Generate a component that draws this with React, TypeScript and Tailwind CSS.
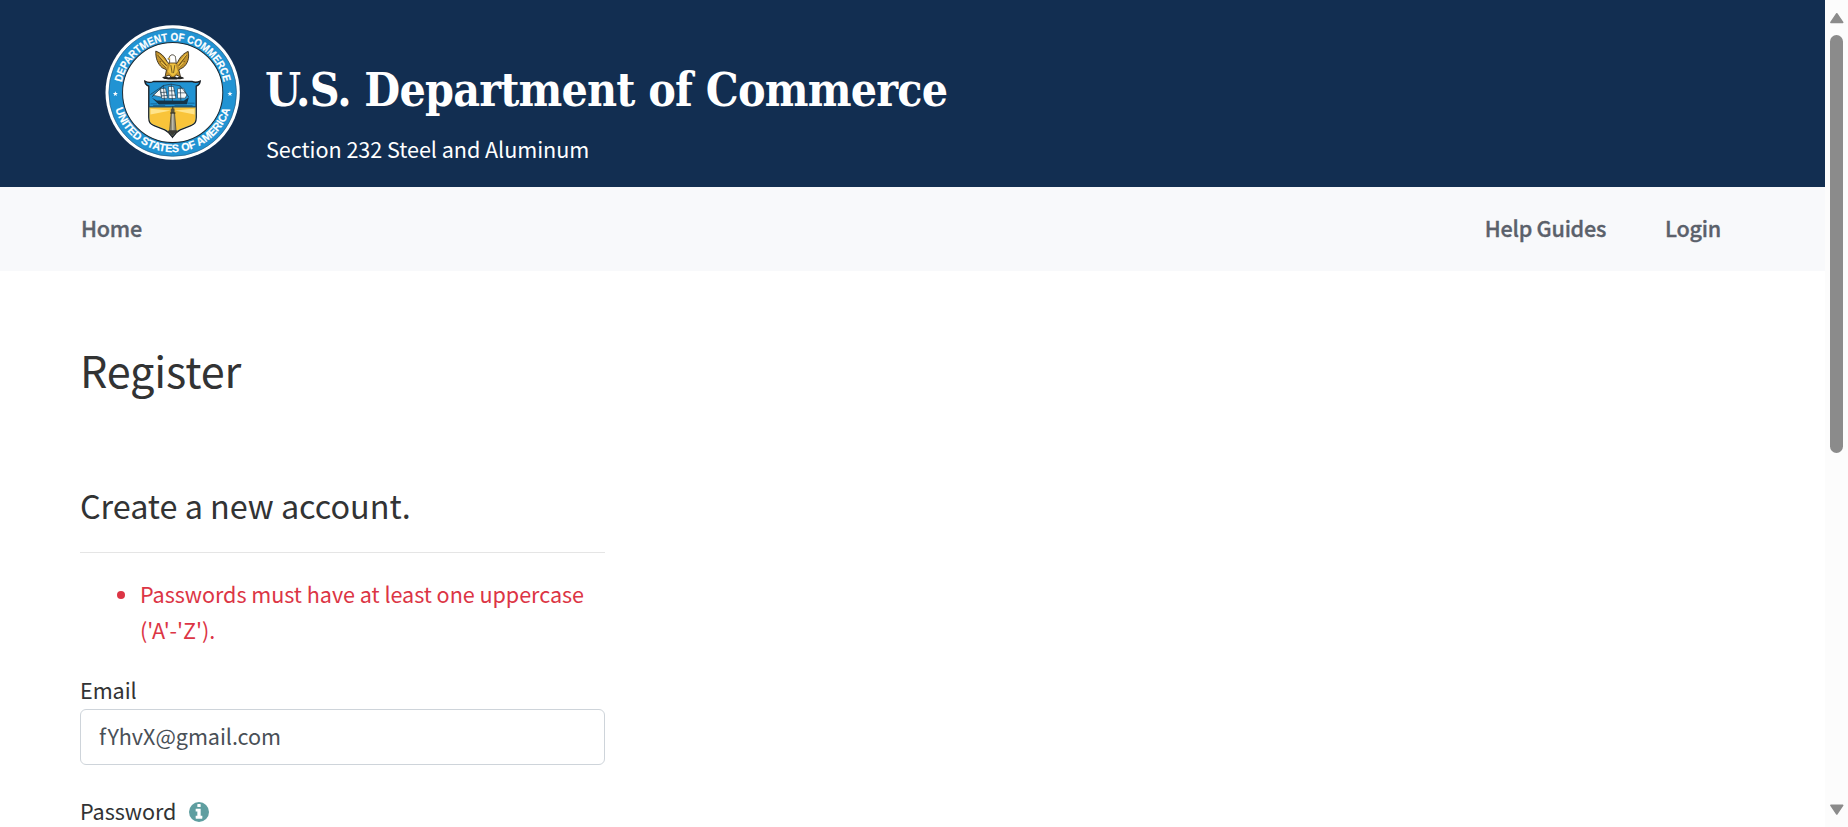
function Seal() {
  const star = "M0 -8 L2 -2.7 L7.6 -2.5 L3.1 1 L4.7 6.5 L0 3.3 L-4.7 6.5 L-3.1 1 L-7.6 -2.5 L-2 -2.7 Z";
  return (
    <svg viewBox="32 30 404 404" className="h-[135px] w-[135px] shrink-0" role="img">
      <defs>
        <path id="seal-top" d="M79.2 232 A155.3 155.3 0 0 1 389.8 232" />
        <path id="seal-bottom" d="M56 232 A178.5 178.5 0 0 0 413 232" />
      </defs>
      <circle cx="234.5" cy="232" r="201" fill="#fff" />
      <circle cx="234.5" cy="232" r="191" fill="#2193d3" stroke="#23597f" strokeWidth="2" />
      <circle cx="234.5" cy="232" r="150" fill="#fff" stroke="#1c2a33" strokeWidth="3" />
      <g fill="#fff" stroke="#fff" strokeWidth="0.6" fontFamily="'Liberation Sans', sans-serif" fontWeight="700" fontSize="33">
        <text>
          <textPath href="#seal-top" startOffset="50%" textAnchor="middle" textLength="426" lengthAdjust="spacingAndGlyphs">DEPARTMENT OF COMMERCE</textPath>
        </text>
        <text>
          <textPath href="#seal-bottom" startOffset="50%" textAnchor="middle" textLength="460" lengthAdjust="spacingAndGlyphs">UNITED STATES OF AMERICA</textPath>
        </text>
      </g>
      <path d={star} transform="translate(63 236)" fill="#fff" />
      <path d={star} transform="translate(406 236)" fill="#fff" />

      {/* eagle */}
      <path d="M184 108 C183 128 189 146 203 158 L216 164 L212 184 L224 180 L234 190 L246 180 L258 185 L253 164 L266 157 C280 146 285 128 281 109 C270 113 257 124 250 140 L245 146 L243 128 C243 117 224 117 225 127 L220 131 L226 134 L224 146 L218 140 C211 124 198 113 184 108 Z" fill="#c2922c" stroke="#2a2212" strokeWidth="2.5" />
      <path d="M225 128 C225 117 243 117 243 129 L244 143 L226 143 Z" fill="#fff" stroke="#555" strokeWidth="1.5" />
      <path d="M220 130 L227 128 L227 134 Z" fill="#f3c84a" />
      <path d="M227 147 L243 147 L250 170 L235 183 L220 170 Z" fill="#efc13f" />
      <path d="M190 120 L216 152 M196 138 L214 158 M276 120 L253 152 M270 138 L254 158 M229 150 L233 174 M241 150 L237 174" stroke="#3a2c10" strokeWidth="2" fill="none" />
      <path d="M193 119 L219 147 M200 141 L217 157 M275 118 L250 147 M267 141 L253 157" stroke="#f3c84a" strokeWidth="3" />
      <path d="M203 187 C212 181 218 185 222 187 C230 184 242 184 249 187 C256 181 264 185 269 189 C257 194 250 191 244 193 L222 193 C214 192 209 193 203 187 Z" fill="#222" />

      {/* shield */}
      <path d="M151 198 C159 202 171 202 177 199 L292 199 C299 202 309 202 317 198 C316 206 314 210 305 213 L305 306 C305 322 300 327 289 331 L257 344 C247 349 240 356 234 366 C228 356 221 349 211 344 L179 331 C168 327 163 322 163 306 L163 213 C154 210 152 206 151 198 Z" fill="#2193d3" stroke="#1b1f25" strokeWidth="4" />
      <path d="M165 276 L303 276 L303 306 C303 320 299 325 288 329 L256 342 C246 347 240 353 234 362 C228 353 221 347 212 342 L180 329 C169 325 165 320 165 306 Z" fill="#f9c43a" />
      <path d="M165 275 H303" stroke="#1b2a35" strokeWidth="2.5" />

      {/* ship */}
      <path d="M172 248 L187 256 L268 257 L283 246 L277 267 L193 268 Z" fill="#143449" />
      <path d="M175 240 L198 221 L202 246 Z M196 221 L213 219 L219 249 L202 250 Z M222 214 L237 214 L244 250 L223 250 Z M249 221 L267 219 L277 239 L272 249 L249 249 Z" fill="#f5f8f9" stroke="#24475c" strokeWidth="2" />
      <path d="M207 211 L210 258 M230 206 L234 260 M257 212 L259 256 M172 246 L207 211 L230 207 L257 212 L283 246 M199 232 L218 231 M223 227 L242 227 M224 240 L245 240 M250 233 L274 233 M202 242 L219 241" stroke="#1d3546" strokeWidth="2" fill="none" />
      <path d="M168 238 L207 211" stroke="#143449" strokeWidth="2" />
      <path d="M168 266 H188 M278 264 H300 M176 271 H212 M240 271 H294" stroke="#124f77" strokeWidth="2" />

      {/* lighthouse */}
      <path d="M229 286 L168 281 V298 Z M240 286 L300 281 V298 Z" fill="#ffe48a" />
      <path d="M230 293 L240 293 L245 351 L225 351 Z" fill="#8e8a78" stroke="#38342a" strokeWidth="2" />
      <path d="M235 294 V350" stroke="#e8e3ce" strokeWidth="2.5" />
      <path d="M229 280 H240 V293 H229 Z" fill="#5b573f" />
      <path d="M235 274 V282 M227 293 H243" stroke="#312d20" strokeWidth="3" />
      <path d="M216 349 L225 345 H245 L254 349 L241 354 L234 362 L226 354 Z" fill="#393a34" />
    </svg>
  );
}

function Scrollbar() {
  return (
    <div className="flex h-full w-[23px] shrink-0 flex-col items-center bg-[#fcfcfc] pt-[12px] pb-[11px]">
      <svg viewBox="0 0 14 12" className="h-[12px] w-[14px]">
        <path d="M6.8 1.8 L12.7 10.4 H0.9 Z" fill="#8b8b8b" stroke="#8b8b8b" strokeWidth="1.6" strokeLinejoin="round" />
      </svg>
      <div className="mt-[11px] h-[418px] w-[13px] rounded-full bg-[#8b8b8b]" />
      <svg viewBox="0 0 14 12" className="mt-auto h-[12px] w-[14px]">
        <path d="M6.8 10 L12.7 1.4 H0.9 Z" fill="#8b8b8b" stroke="#8b8b8b" strokeWidth="1.6" strokeLinejoin="round" />
      </svg>
    </div>
  );
}

export default function App() {
  return (
    <div className="flex h-[827px] w-full overflow-hidden bg-white font-['Noto_Sans_CJK_SC',sans-serif] text-[21.6px] leading-[36px] tracking-[-0.05px] text-[#323334]">
      <div className="flex min-w-0 flex-1 flex-col">
        <header className="flex h-[187px] shrink-0 bg-[#122e51] pl-[105px] text-white">
          <div className="pt-[25px]">
            <Seal />
          </div>
          <div className="pt-[63px] pl-[25px]">
            <h1 className="font-['DejaVu_Serif_Condensed','DejaVu_Serif',serif] text-[46px] leading-[54px] font-bold tracking-[-0.79px] whitespace-nowrap">
              U.S. Department of Commerce
            </h1>
            <p className="mt-[14px] pl-px">Section 232 Steel and Aluminum</p>
          </div>
        </header>

        <nav className="flex h-[84px] shrink-0 items-center bg-[#f8f9fb] pr-[104px] pb-[2px] pl-[81px] font-medium tracking-[-0.25px] text-[#5b616b] [-webkit-text-stroke:0.35px_#5b616b]">
          <a>Home</a>
          <a className="ml-auto">Help Guides</a>
          <a className="ml-[59px]">Login</a>
        </nav>

        <main className="w-[605px] shrink-0 pt-[69px] pl-[80px]">
          <h2 className="text-[43.2px] leading-[58px] tracking-[-0.15px]">Register</h2>
          <h4 className="mt-[85px] text-[32.4px] leading-[43px]">Create a new account.</h4>
          <hr className="mt-[26px] border-t border-[#e5e5e5]" />
          <ul className="mt-[23px] list-disc pl-[60px] text-[#dc3545]">
            <li>Passwords must have at least one uppercase ('A'-'Z').</li>
          </ul>
          <label className="mt-[24px] block">Email</label>
          <div className="mt-[1px] flex h-[56px] items-center rounded-[6px] border border-[#ced4da] px-[18px] pb-[2px] text-[#495057]">
            fYhvX@gmail.com
          </div>
          <div className="mt-[28px] flex items-center">
            <label>Password</label>
            <svg viewBox="0 0 1536 1536" className="mt-[2px] ml-[13px] h-[20px] w-[20px]">
              <circle cx="768" cy="768" r="768" fill="#5f9ea0" />
              <path d="M1024 1248v-160q0-14-9-23t-23-9h-96V544q0-14-9-23t-23-9H544q-14 0-23 9t-9 23v160q0 14 9 23t23 9h96v320h-96q-14 0-23 9t-9 23v160q0 14 9 23t23 9h448q14 0 23-9t9-23zM896 352V192q0-14-9-23t-23-9H672q-14 0-23 9t-9 23v160q0 14 9 23t23 9h192q14 0 23-9t9-23z" fill="#fff" />
            </svg>
          </div>
        </main>
      </div>
      <Scrollbar />
    </div>
  );
}
